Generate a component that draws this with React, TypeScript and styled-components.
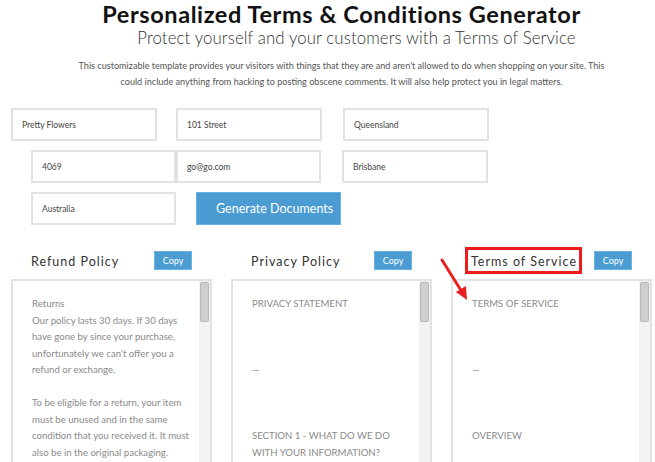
import styled, { createGlobalStyle } from "styled-components";

const GlobalStyle = createGlobalStyle`
  body {
    margin: 0;
    background: #fff;
    font-family: "Lato", "Open Sans", sans-serif;
  }
`;

const Page = styled.div`
  position: relative;
  width: 655px;
  height: 462px;
  overflow: hidden;
`;

const Header = styled.header`
  text-align: center;
  padding-left: 28px;
  padding-top: 1px;
`;

const Title = styled.h1`
  margin: 0;
  font-size: 23.5px;
  line-height: 26px;
  font-weight: 700;
  color: #111;
  letter-spacing: 0.6px;
`;

const Subtitle = styled.h2`
  margin: 0;
  padding-left: 30px;
  font-size: 16.8px;
  line-height: 22px;
  font-weight: 300;
  color: #333;
  letter-spacing: 0.1px;
`;

const Intro = styled.p`
  margin: 9px auto 0;
  width: 540px;
  font-size: 9.1px;
  line-height: 16px;
  color: #555;
`;

const Form = styled.div`
  margin-top: 18px;
  display: flex;
  flex-direction: column;
  gap: 9px;
`;

const FieldRow = styled.div<{ $indent: number }>`
  display: flex;
  padding-left: ${(p) => p.$indent}px;
`;

const Field = styled.div<{ $gap?: number; $width?: number }>`
  box-sizing: border-box;
  width: ${(p) => p.$width ?? 146}px;
  height: 33px;
  margin-right: ${(p) => p.$gap ?? 0}px;
  border: 2px solid #e2e2e2;
  padding-left: 9px;
  display: flex;
  align-items: center;
  font-size: 8.5px;
  color: #444;
`;

const GenerateButton = styled.button`
  box-sizing: border-box;
  width: 145px;
  height: 33px;
  border: 1px solid #6cb2e0;
  background: #4a9cd3;
  color: #fff;
  font-family: inherit;
  font-size: 12.5px;
  text-align: left;
  padding-left: 19px;
  cursor: pointer;
`;

const Panels = styled.div`
  margin-top: 25px;
  padding-left: 11px;
  display: flex;
  gap: 19px;
`;

const Panel = styled.section`
  width: 201px;
`;

const PanelHead = styled.div`
  display: flex;
  align-items: center;
  height: 22px;
  padding-left: 20px;
`;

const PanelTitle = styled.div`
  width: 123px;
  margin-top: -2px;
`;

const HeadingText = styled.span<{ $marked?: boolean }>`
  display: inline-block;
  margin-left: -6px;
  padding: 8px 5px 5px 6px;
  font-size: 12.5px;
  line-height: 14px;
  letter-spacing: 1px;
  color: #333;
  outline: ${(p) => (p.$marked ? "3px solid #ee1c1c" : "none")};
  outline-offset: -3px;
`;

const CopyButton = styled.button`
  width: 38px;
  height: 19px;
  margin-top: -2px;
  border: 1px solid #6cb2e0;
  background: #4a9cd3;
  color: #fff;
  font-family: inherit;
  font-size: 9px;
  padding: 0;
`;

const TextBox = styled.div`
  box-sizing: border-box;
  margin-top: 7px;
  height: 200px;
  border: 2px solid #e2e2e2;
  display: flex;
`;

const TextBody = styled.div`
  flex: 1;
  padding: 15px 0 0 19px;
  font-size: 9.6px;
  line-height: 16.5px;
  color: #8a8a8a;
`;

const Line = styled.div`
  min-height: 16.5px;
`;

const ScrollTrack = styled.div`
  width: 11px;
  background: #f2f2f2;
  padding-top: 1px;
  display: flex;
  justify-content: center;
`;

const ScrollThumb = styled.div`
  box-sizing: border-box;
  width: 9px;
  height: 40px;
  background: #cfcfcf;
  border: 1px solid #b8b8b8;
  border-radius: 2px;
`;

const Arrow = styled.svg`
  position: absolute;
  left: 436px;
  top: 254px;
`;

const panels = [
  {
    title: "Refund Policy",
    lines: [
      "Returns",
      "Our policy lasts 30 days. If 30 days",
      "have gone by since your purchase,",
      "unfortunately we can't offer you a",
      "refund or exchange.",
      "",
      "To be eligible for a return, your item",
      "must be unused and in the same",
      "condition that you received it. It must",
      "also be in the original packaging.",
    ],
  },
  {
    title: "Privacy Policy",
    lines: [
      "PRIVACY STATEMENT",
      "",
      "",
      "",
      "—",
      "",
      "",
      "",
      "SECTION 1 - WHAT DO WE DO",
      "WITH YOUR INFORMATION?",
    ],
  },
  {
    title: "Terms of Service",
    marked: true,
    lines: ["TERMS OF SERVICE", "", "", "", "—", "", "", "", "OVERVIEW"],
  },
];

export default function App() {
  return (
    <>
      <GlobalStyle />
      <Page>
        <Header>
          <Title>Personalized Terms &amp; Conditions Generator</Title>
          <Subtitle>Protect yourself and your customers with a Terms of Service</Subtitle>
          <Intro>
            This customizable template provides your visitors with things that they are and aren't
            allowed to do when shopping on your site. This could include anything from hacking to
            posting obscene comments. It will also help protect you in legal matters.
          </Intro>
        </Header>

        <Form>
          <FieldRow $indent={11}>
            <Field $gap={19}>Pretty Flowers</Field>
            <Field $gap={21}>101 Street</Field>
            <Field>Queensland</Field>
          </FieldRow>
          <FieldRow $indent={31}>
            <Field $width={145}>4069</Field>
            <Field $width={145} $gap={21}>go@go.com</Field>
            <Field>Brisbane</Field>
          </FieldRow>
          <FieldRow $indent={31}>
            <Field $width={145} $gap={20}>Australia</Field>
            <GenerateButton>Generate Documents</GenerateButton>
          </FieldRow>
        </Form>

        <Panels>
          {panels.map((p) => (
            <Panel key={p.title}>
              <PanelHead>
                <PanelTitle>
                  <HeadingText $marked={p.marked}>{p.title}</HeadingText>
                </PanelTitle>
                <CopyButton>Copy</CopyButton>
              </PanelHead>
              <TextBox>
                <TextBody>
                  {p.lines.map((l, i) => (
                    <Line key={i}>{l}</Line>
                  ))}
                </TextBody>
                <ScrollTrack>
                  <ScrollThumb />
                </ScrollTrack>
              </TextBox>
            </Panel>
          ))}
        </Panels>

        <Arrow width="40" height="52" viewBox="0 0 40 52">
          <line x1="6" y1="6" x2="26" y2="38" stroke="#e8201f" strokeWidth="3" strokeLinecap="round" />
          <polygon points="31,46 20,38 30,32" fill="#e8201f" />
        </Arrow>
      </Page>
    </>
  );
}
